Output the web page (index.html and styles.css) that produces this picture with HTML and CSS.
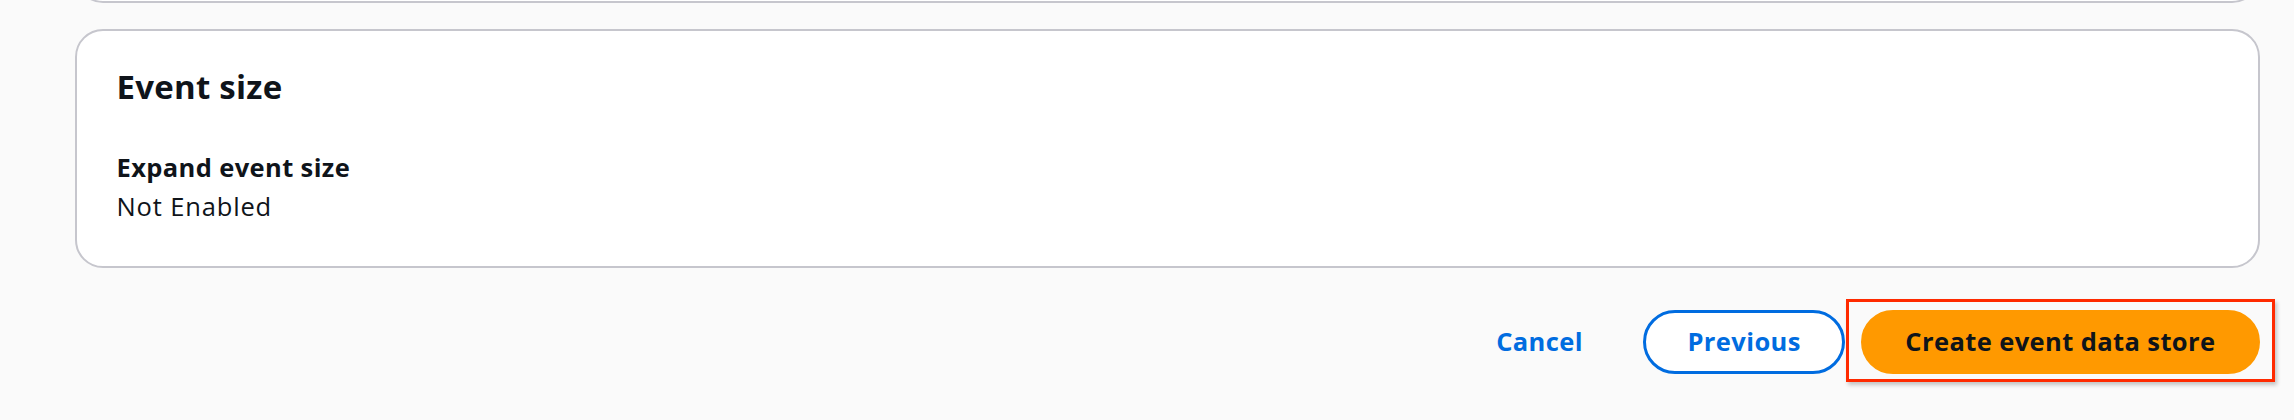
FILE: index.html
```html
<!DOCTYPE html>
<html lang="en">
<head>
<meta charset="utf-8">
<title>Review and create</title>
<link rel="stylesheet" href="styles.css">
</head>
<body>
<div class="page">
  <div class="card card-prev"></div>
  <section class="card">
    <h2 class="card-title">Event size</h2>
    <div class="kv">
      <div class="kv-label">Expand event size</div>
      <div class="kv-value">Not Enabled</div>
    </div>
  </section>
  <div class="actions">
    <button class="btn btn-link" type="button">Cancel</button>
    <button class="btn btn-normal" type="button">Previous</button>
    <button class="btn btn-primary is-highlighted" type="button">Create event data store</button>
  </div>
</div>
</body>
</html>
```

FILE: styles.css
```css
html, body {
  margin: 0;
  padding: 0;
  background: #fafafa;
  height: 100%;
  overflow: hidden;
}

body {
  font-family: "Open Sans", "Noto Sans", sans-serif;
  color: #0f141a;
}

.page {
  padding: 0 34.5px 0 74.5px;
}

.card {
  box-sizing: border-box;
  background: #ffffff;
  border: 2px solid #c6c6cd;
  border-radius: 28px;
}

.card-prev {
  height: 60px;
  margin-top: -57px;
}

.card + .card {
  margin-top: 26px;
  padding: 36.5px 40px 40px;
}

.card-title {
  margin: 0;
  font-size: 33px;
  line-height: 38px;
  font-weight: 700;
  letter-spacing: 0.25px;
}

.kv {
  margin-top: 42.5px;
  font-size: 25.5px;
  line-height: 39px;
}

.kv-label {
  font-weight: 700;
  letter-spacing: 0.38px;
}

.kv-value {
  font-weight: 400;
  letter-spacing: 0.85px;
}

.actions {
  margin-top: 42px;
  display: flex;
  justify-content: flex-end;
  align-items: center;
  gap: 16.5px;
}

.btn {
  box-sizing: border-box;
  height: 64px;
  padding: 0 41px;
  border: 3.5px solid transparent;
  border-radius: 32px;
  font-family: "Open Sans", "Noto Sans", sans-serif;
  font-size: 25.5px;
  font-weight: 700;
  letter-spacing: 0.4px;
  line-height: 1;
  display: inline-flex;
  align-items: center;
  background: transparent;
  cursor: pointer;
}

.btn-link {
  color: #006ce0;
}

.btn-normal {
  color: #006ce0;
  background: #ffffff;
  border-color: #006ce0;
}

.btn-primary {
  color: #0f141a;
  background: #ff9900;
  border-color: #ff9900;
}

.is-highlighted {
  position: relative;
}

.is-highlighted::after {
  content: "";
  position: absolute;
  top: -14.5px;
  bottom: -11px;
  left: -18.5px;
  right: -18px;
  border: 3.5px solid #ff2a00;
  box-shadow: 2px 3px 4px rgba(0, 0, 0, 0.22);
  pointer-events: none;
}
```
